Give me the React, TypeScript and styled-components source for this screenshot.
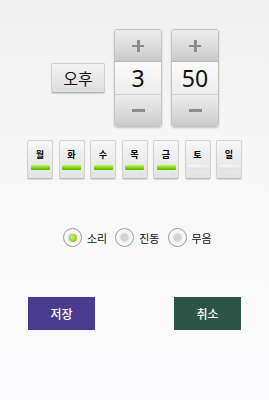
import styled, { createGlobalStyle } from "styled-components";

const GlobalStyle = createGlobalStyle`
  html, body {
    margin: 0;
    padding: 0;
  }
  body {
    font-family: "Noto Sans", "Noto Sans CJK KR", sans-serif;
  }
`;

const days = [
  { txt: "월", on: true },
  { txt: "화", on: true },
  { txt: "수", on: true },
  { txt: "목", on: true },
  { txt: "금", on: true },
  { txt: "토", on: false },
  { txt: "일", on: false },
];

const modes = [
  { txt: "소리", checked: true },
  { txt: "진동", checked: false },
  { txt: "무음", checked: false },
];

function Picker({ value }: { value: string }) {
  return (
    <StyledPicker>
      <StyledStep>
        <StyledPlus />
      </StyledStep>
      <StyledValue>{value}</StyledValue>
      <StyledStep>
        <StyledMinus />
      </StyledStep>
    </StyledPicker>
  );
}

export default function App() {
  return (
    <StyledPage>
      <GlobalStyle />
      <StyledTimeRow>
        <StyledAmPm>오후</StyledAmPm>
        <Picker value="3" />
        <Picker value="50" />
      </StyledTimeRow>
      <StyledDayRow>
        {days.map(({ txt, on }, i) => (
          <StyledDay key={i}>
            <StyledDayTxt>{txt}</StyledDayTxt>
            <StyledDayBar on={on} />
          </StyledDay>
        ))}
      </StyledDayRow>
      <StyledRadioRow>
        {modes.map(({ txt, checked }) => (
          <StyledRadioItem key={txt}>
            <StyledRadio>{checked && <StyledDot />}</StyledRadio>
            <StyledRadioTxt>{txt}</StyledRadioTxt>
          </StyledRadioItem>
        ))}
      </StyledRadioRow>
      <StyledBtnRow>
        <StyledActionBtn bg="#4a3c91">저장</StyledActionBtn>
        <StyledActionBtn bg="#2c5447">취소</StyledActionBtn>
      </StyledBtnRow>
    </StyledPage>
  );
}

const StyledPage = styled.div`
  width: 269px;
  height: 400px;
  overflow: hidden;
  background: linear-gradient(#f0f0f0, #f7f7f8 40%, #fbfbfd);
  font-family: "Noto Sans CJK KR", "Noto Sans", sans-serif;
`;

const StyledTimeRow = styled.div`
  display: flex;
  align-items: center;
  gap: 9px;
  padding: 29px 0 0 51px;
`;

const StyledAmPm = styled.div`
  width: 54px;
  height: 30px;
  box-sizing: border-box;
  display: flex;
  align-items: center;
  justify-content: center;
  background: linear-gradient(#f3f3f3, #dedede);
  border: 1px solid #cfcfcf;
  border-bottom-color: #b4b4b4;
  border-radius: 2px;
  box-shadow: 0 1px 1px rgba(0, 0, 0, 0.15);
  font-size: 16px;
  color: #111;
`;

const StyledPicker = styled.div`
  width: 48px;
  height: 98px;
  display: flex;
  flex-direction: column;
  border: 1px solid #c4c4c4;
  border-radius: 3px;
  box-sizing: border-box;
  overflow: hidden;
  box-shadow: 0 1px 2px rgba(0, 0, 0, 0.2);
`;

const StyledStep = styled.div`
  height: 32px;
  display: flex;
  align-items: center;
  justify-content: center;
  background: linear-gradient(#ececec, #d6d6d6 70%, #c8c8c8);
`;

const StyledPlus = styled.div`
  position: relative;
  width: 12px;
  height: 12px;
  &::before,
  &::after {
    content: "";
    position: absolute;
    background: #8c8c8c;
  }
  &::before {
    left: 0;
    right: 0;
    top: 5px;
    height: 2.5px;
  }
  &::after {
    top: 0;
    bottom: 0;
    left: 5px;
    width: 2.5px;
  }
`;

const StyledMinus = styled.div`
  width: 13px;
  height: 3px;
  background: #8c8c8c;
`;

const StyledValue = styled.div`
  flex: 1;
  display: flex;
  align-items: center;
  justify-content: center;
  background: linear-gradient(#fbfbfb, #ececec);
  border-top: 1px solid #b8b8b8;
  border-bottom: 1px solid #cfcfcf;
  font-family: "Noto Sans", sans-serif;
  font-size: 23px;
  color: #111;
`;

const StyledDayRow = styled.div`
  display: flex;
  gap: 5.5px;
  padding: 13px 0 0 27px;
`;

const StyledDay = styled.div`
  width: 26px;
  height: 39px;
  box-sizing: border-box;
  display: flex;
  flex-direction: column;
  align-items: center;
  padding-top: 8px;
  background: linear-gradient(#f6f6f6, #e2e2e2);
  border: 1px solid #d2d2d2;
  border-bottom-color: #bcbcbc;
  border-radius: 2px;
  box-shadow: 0 1px 1px rgba(0, 0, 0, 0.12);
`;

const StyledDayTxt = styled.span`
  font-size: 9px;
  font-weight: bold;
  line-height: 12px;
  color: #000;
`;

const StyledDayBar = styled.div<{ on: boolean }>`
  margin-top: 4px;
  width: 19px;
  height: 5px;
  border-radius: 1px;
  background: ${({ on }) =>
    on
      ? "linear-gradient(#c6f55a, #7fd000 60%, #62b000)"
      : "linear-gradient(#f8f8f8, #dcdcdc)"};
`;

const StyledRadioRow = styled.div`
  display: flex;
  gap: 8px;
  padding: 49px 0 0 63px;
`;

const StyledRadioItem = styled.div`
  display: flex;
  align-items: center;
  gap: 5px;
`;

const StyledRadio = styled.div`
  width: 19px;
  height: 19px;
  box-sizing: border-box;
  border-radius: 50%;
  border: 1px solid #9a9a9a;
  background: radial-gradient(circle, #d4d4d4 0 3.5px, #f4f4f4 5px, #fff);
  display: flex;
  align-items: center;
  justify-content: center;
`;

const StyledDot = styled.div`
  width: 8px;
  height: 8px;
  border-radius: 50%;
  background: radial-gradient(circle at 40% 35%, #c9f06a, #6fbe10);
`;

const StyledRadioTxt = styled.span`
  font-size: 11px;
  color: #111;
`;

const StyledBtnRow = styled.div`
  display: flex;
  justify-content: space-between;
  padding: 50px 28px 0 28px;
`;

const StyledActionBtn = styled.div<{ bg: string }>`
  width: 67px;
  height: 33px;
  display: flex;
  align-items: center;
  justify-content: center;
  background: ${({ bg }) => bg};
  color: #fff;
  font-size: 12px;
  font-weight: 500;
`;
